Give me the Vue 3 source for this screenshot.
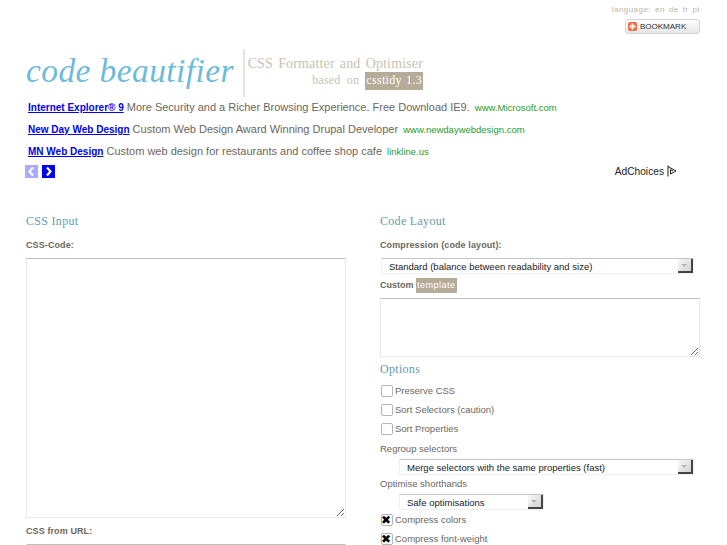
<script setup>
/* Datos de los anuncios y de las opciones del formulario */
const ads = [
  { title: 'Internet Explorer® 9', text: 'More Security and a Richer Browsing Experience. Free Download IE9.', url: 'www.Microsoft.com' },
  { title: 'New Day Web Design', text: 'Custom Web Design Award Winning Drupal Developer', url: 'www.newdaywebdesign.com' },
  { title: 'MN Web Design', text: 'Custom web design for restaurants and coffee shop cafe', url: 'linkline.us' }
]
const languages = ['en', 'de', 'fr', 'pt']
</script>

<template>
  <div class="page">
    <!-- Idioma y marcador -->
    <div class="top">
      <div class="lang">language:<span v-for="l in languages" :key="l" class="lang-item">{{ l }}</span></div>
      <a class="bookmark" href="#" @click.prevent>
        <span class="plus">
          <svg width="9" height="9" viewBox="0 0 9 9"><path d="M3.500 1.500h2v2h2v2h-2v2h-2v-2h-2v-2h2z" fill="#fff" /></svg>
        </span>
        BOOKMARK
      </a>
    </div>

    <!-- Cabecera -->
    <header class="header">
      <h1 class="logo">code beautifier</h1>
      <div class="tagline">
        <div>CSS Formatter and Optimiser</div>
        <div class="based">based on <span class="version">csstidy 1.3</span></div>
      </div>
    </header>

    <!-- Anuncios -->
    <div class="ads">
      <p v-for="ad in ads" :key="ad.title" class="ad">
        <a href="#" class="ad-title" @click.prevent>{{ ad.title }}</a>
        {{ ad.text }}
        <span class="ad-url">{{ ad.url }}</span>
      </p>
      <div class="ad-foot">
        <div class="ad-nav">
          <span class="nav-btn off">
            <svg width="13" height="13" viewBox="0 0 13 13"><path d="M8 2.500 4.500 6.500 8 10.500" fill="none" stroke="#fff" stroke-width="2.200" /></svg>
          </span>
          <span class="nav-btn">
            <svg width="13" height="13" viewBox="0 0 13 13"><path d="M5 2.500 8.500 6.500 5 10.500" fill="none" stroke="#fff" stroke-width="2.200" /></svg>
          </span>
        </div>
        <div class="adchoices">
          AdChoices
          <svg width="10" height="12" viewBox="0 0 10 12"><path d="M1 .5v11M1 1.500 9 6 3.500 9V4.500L6 6" fill="none" stroke="#222" stroke-width="1" /></svg>
        </div>
      </div>
    </div>

    <!-- Formulario en dos columnas -->
    <main class="columns">
      <section class="col">
        <h2 class="heading">CSS Input</h2>
        <label class="label first">CSS-Code:</label>
        <textarea class="code"></textarea>
        <label class="label url-label">CSS from URL:</label>
        <input class="url" type="text" />
      </section>

      <section class="col">
        <h2 class="heading">Code Layout</h2>
        <label class="label first">Compression (code layout):</label>
        <div class="select wide">
          <select><option>Standard (balance between readability and size)</option></select>
          <span class="arrow"></span>
        </div>
        <div class="custom"><b>Custom</b> <span class="tpl">template</span></div>
        <textarea class="template"></textarea>
        <h2 class="heading options">Options</h2>
        <label class="check"><input type="checkbox" />Preserve CSS</label>
        <label class="check"><input type="checkbox" />Sort Selectors (caution)</label>
        <label class="check"><input type="checkbox" />Sort Properties</label>
        <div class="plain regroup">Regroup selectors</div>
        <div class="select indent">
          <select><option>Merge selectors with the same properties (fast)</option></select>
          <span class="arrow"></span>
        </div>
        <div class="plain short">Optimise shorthands</div>
        <div class="select indent small">
          <select><option>Safe optimisations</option></select>
          <span class="arrow"></span>
        </div>
        <label class="check"><input type="checkbox" checked />Compress colors</label>
        <label class="check"><input type="checkbox" checked />Compress font-weight</label>
      </section>
    </main>
  </div>
</template>

<style>
html, body {
  height: 545px;
  overflow: hidden;
  background: #fff;
}
</style>

<style scoped>
.page {
  width: 727px;
  height: 545px;
  overflow: hidden;
  font-family: "Liberation Sans", Arial, sans-serif;
  font-size: 9.5px;
  color: #6b675c;
  box-sizing: border-box;
  padding: 4px 27px 0 26px;
}

.top {
  display: flex;
  flex-direction: column;
  align-items: flex-end;
  height: 45px;
}

.lang {
  font-size: 8px;
  line-height: 12px;
  letter-spacing: 0.45px;
  color: #bdb5a3;
}

.lang-item {
  margin-left: 4px;
}

.bookmark {
  display: flex;
  align-items: center;
  gap: 3px;
  box-sizing: border-box;
  width: 75px;
  height: 15px;
  margin-top: 3px;
  padding-left: 2px;
  border: 1px solid #d5d5d5;
  border-radius: 3px;
  background: linear-gradient(#fff, #e6e6e6);
  color: #333;
  font-size: 8px;
  text-decoration: none;
}

.plus {
  display: flex;
  align-items: center;
  justify-content: center;
  width: 9px;
  height: 9px;
  border-radius: 2px;
  background: #f4693a;
}

.header {
  display: flex;
  height: 48px;
}

.logo {
  margin: 0;
  width: 217px;
  padding-top: 1px;
  border-right: 2px solid #e3e3e3;
  font-family: "Liberation Serif", serif;
  font-size: 33.500px;
  font-style: italic;
  font-weight: 400;
  line-height: 42px;
  letter-spacing: 0.4px;
  color: #6cbbd8;
  white-space: nowrap;
}

.tagline {
  width: 176px;
  margin-left: 2px;
  padding-top: 6px;
  text-align: right;
  font-family: "Liberation Serif", serif;
  font-size: 14px;
  line-height: 17px;
  letter-spacing: 0.15px;
  word-spacing: 1.500px;
  color: #c8c2b3;
  white-space: nowrap;
}

.based {
  font-size: 12px;
  letter-spacing: 0.2px;
  word-spacing: 3px;
}

.version {
  display: inline-block;
  padding: 0 1px;
  height: 18px;
  line-height: 17px;
  background: #b5ab98;
  color: #fff;
  letter-spacing: 0.3px;
  word-spacing: 1px;
}

.ad {
  margin: 0 0 0 2px;
  height: 22px;
  line-height: 20px;
  font-size: 11px;
  white-space: nowrap;
}

.ad-title {
  color: #0000ee;
  font-size: 10px;
  font-weight: 700;
}

.ad-url {
  margin-left: 2px;
  font-size: 9.500px;
  color: #2a9a2a;
}

.ad-foot {
  display: flex;
  justify-content: space-between;
  align-items: flex-start;
  margin-top: 2px;
  height: 48px;
}

.ad-nav {
  display: flex;
  gap: 4px;
  margin-left: -1px;
}

.nav-btn {
  display: block;
  width: 13px;
  height: 13px;
  background: #0000ee;
}

.nav-btn.off {
  background: #aaaaff;
}

.adchoices {
  display: flex;
  align-items: center;
  gap: 3px;
  padding-right: 23px;
  color: #222;
  font-size: 10.200px;
}

.columns {
  display: grid;
  grid-template-columns: 320px 320px;
  column-gap: 34px;
}

.col {
  display: flex;
  flex-direction: column;
  align-items: flex-start;
}

.heading {
  margin: 0;
  font-family: "Liberation Serif", serif;
  font-size: 12px;
  font-weight: 400;
  line-height: 16px;
  letter-spacing: 0.3px;
  color: #5f9bab;
}

.label {
  font-weight: 700;
  font-size: 9px;
  line-height: 12px;
  letter-spacing: 0.1px;
}

.label.first {
  margin: 10px 0 7px;
}

textarea,
.url {
  display: block;
  box-sizing: border-box;
  width: 320px;
  margin: 0;
  padding: 0;
  border: 1px solid #e8e8e8;
  border-top: 1px solid #bdbdbd;
  background: #fff;
  outline: none;
}

.code {
  height: 260px;
}

.url-label {
  margin-top: 7px;
}

.url {
  height: 20px;
  margin-top: 7px;
}

.select {
  position: relative;
  box-sizing: border-box;
  width: 313px;
  height: 16px;
  margin-left: 1px;
  border: 1px solid #f0f0f0;
  border-top: 1px solid #c4c4c4;
}

.select select {
  appearance: none;
  display: block;
  width: 100%;
  height: 100%;
  padding: 0 0 0 7px;
  border: 0;
  background: transparent;
  font-family: "Liberation Sans", Arial, sans-serif;
  font-size: 9.5px;
  color: #222;
}

/* Botón del desplegable, dibujado con CSS */
.arrow {
  position: absolute;
  top: 0;
  right: 0;
  width: 15px;
  height: 14px;
  box-sizing: border-box;
  border-right: 2px solid #444;
  border-bottom: 2px solid #444;
  background: linear-gradient(135deg, #fafafa, #d2d2d2);
}

.arrow::after {
  content: "";
  position: absolute;
  top: 5px;
  left: 3px;
  border: 3px solid transparent;
  border-top: 3px solid #b5b5b5;
}

.custom {
  margin: 4px 0 5px;
  height: 15px;
  line-height: 14px;
  font-size: 9px;
}

.tpl {
  display: inline-block;
  height: 15px;
  padding: 0 1px;
  background: #b5ab98;
  color: #fff;
  letter-spacing: 0.5px;
}

.template {
  height: 59px;
}

.options {
  margin-top: 4px;
  margin-bottom: 4px;
}

.check {
  display: flex;
  align-items: center;
  gap: 1px;
  height: 19px;
  font-size: 9.5px;
}

.check input {
  appearance: none;
  position: relative;
  box-sizing: border-box;
  flex: none;
  width: 12px;
  height: 12px;
  margin: 0 1px;
  border: 1px solid #b5b5b5;
  border-radius: 2px;
  background: #fff;
}

.check input:checked::after {
  content: "✖";
  position: absolute;
  top: -1px;
  left: -1px;
  font-family: "DejaVu Sans", sans-serif;
  font-size: 12px;
  line-height: 12px;
  color: #000;
}

.plain {
  font-size: 9.5px;
  line-height: 12px;
}

.regroup {
  margin: 5px 0 4px;
}

.short {
  margin: 3px 0 4px;
}

.select.indent {
  width: 295px;
  margin-left: 19px;
}

.select.small {
  width: 145px;
}
</style>
